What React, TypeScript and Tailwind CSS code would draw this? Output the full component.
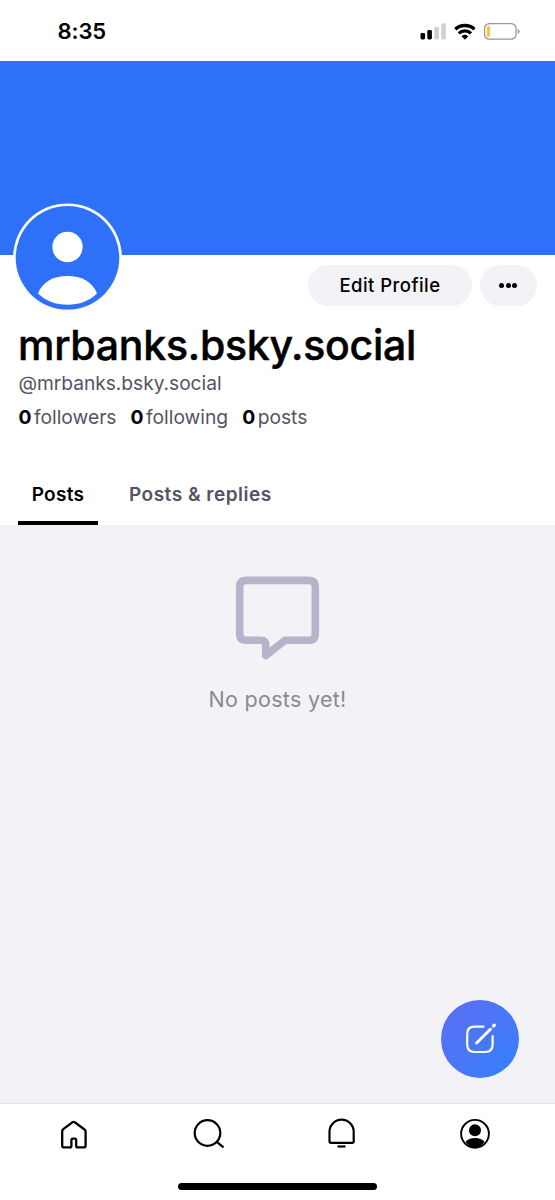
import React from 'react';

function StatusBar() {
  return (
    <header className="flex h-[61px] shrink-0 items-start justify-between pl-[57.500px] pr-[35px]">
      <span className="pt-[16px] text-[22px] font-semibold leading-[30px] tracking-[-0.1px]">8:35</span>
      <svg className="mt-[20px]" width="100" height="24" viewBox="420 20 100 24">
        <rect x="420.5" y="33" width="4.6" height="6.5" rx="1.4" fill="#000" />
        <rect x="427.3" y="30" width="4.6" height="9.5" rx="1.4" fill="#000" />
        <rect x="434.3" y="26.7" width="4.6" height="12.8" rx="1.4" fill="#d0d0d0" />
        <rect x="441.2" y="23.3" width="4.6" height="16.2" rx="1.4" fill="#d0d0d0" />
        <path d="M455.3 29.3 A14.2 14.2 0 0 1 474.5 29.3" fill="none" stroke="#000" strokeWidth="3.4" />
        <path d="M458.8 33.4 A8.6 8.6 0 0 1 471 33.4" fill="none" stroke="#000" strokeWidth="3.2" />
        <path d="M461.5 36.3 Q464.9 33.4 468.3 36.3 L464.9 39.8 Z" fill="#000" />
        <rect x="484.6" y="23.6" width="31.4" height="15.6" rx="4.8" fill="#fff" stroke="#96939b" strokeWidth="1.2" />
        <rect x="486.9" y="25.9" width="3.2" height="11" rx="1.4" fill="#f5c838" />
        <path d="M517.6 28.9 Q519.6 29.6 519.6 31.4 Q519.6 33.2 517.6 33.9 Z" fill="#96939b" />
      </svg>
    </header>
  );
}

function Avatar() {
  return (
    <svg className="relative -mt-[52px] ml-[13px] shrink-0" width="109" height="110" viewBox="13 203 109 110">
      <circle cx="67.5" cy="257.8" r="54.4" fill="#fff" />
      <circle cx="67.5" cy="257.8" r="51.8" fill="#2f70f8" />
      <circle cx="67.5" cy="247" r="15.2" fill="#fff" />
      <path d="M38 293.4 C42.5 281.5 54 276 67.5 276 C81 276 92.5 281.5 97 293.4 C89.5 300.8 79 304.7 67.5 304.7 C56 304.7 45.5 300.8 38 293.4 Z" fill="#fff" />
    </svg>
  );
}

function Stat({ label }: { label: string }) {
  return (
    <span className="flex gap-[3px]">
      <b className="w-[12.500px] font-bold text-black">0</b>
      <span>{label}</span>
    </span>
  );
}

function EmptyFeed() {
  return (
    <main className="flex h-[578px] shrink-0 flex-col items-center bg-[#f2f2f7]">
      <svg className="mt-[47px]" width="92" height="92" viewBox="232 572 92 92" fill="none" stroke="#b6b4ca" strokeWidth="7.6" strokeLinejoin="round">
        <path d="M246 580.4 H309 Q315.3 580.4 315.3 586.7 V634 Q315.3 640.3 309 640.3 H285 L265.8 655.5 V645.5 Q265.8 640.3 260.6 640.3 H246 Q239.7 640.3 239.7 634 V586.7 Q239.7 580.4 246 580.4 Z" />
      </svg>
      <p className="mt-[20px] text-[21.500px] leading-[30px] tracking-[0.3px] text-[#8b8a91]">No posts yet!</p>
    </main>
  );
}

function ComposeButton() {
  return (
    <button aria-label="New post" className="absolute left-[441px] top-[1000px] size-[78px] rounded-full bg-linear-to-br from-[#5a6df3] to-[#2f80fb]">
      <svg width="78" height="78" viewBox="441 1000 78 78" fill="none" stroke="#fff" strokeLinecap="round">
        <path d="M483.5 1026.7 H474.5 Q467.2 1026.7 467.2 1034 V1044.8 Q467.2 1052 474.5 1052 H485.3 Q492.6 1052 492.6 1044.8 V1036" strokeWidth="2.2" />
        <path d="M476.6 1043 L490.4 1029.3" strokeWidth="3" />
        <path d="M493.6 1025.9 L494.2 1025.3" strokeWidth="3.4" />
      </svg>
    </button>
  );
}

function BottomNav() {
  return (
    <nav className="flex h-[97px] shrink-0 flex-col items-center border-t border-[#e3e3e6] bg-white">
      <div className="flex h-[62px] w-full items-center gap-[99px] pl-[57px]">
        <svg className="mr-[2px] shrink-0" width="34" height="34" viewBox="57 1118 34 34" fill="none" stroke="#000" strokeWidth="2.3" strokeLinejoin="round">
          <path d="M62.2 1131.2 Q62.2 1130 63.3 1129.2 L72.3 1122.3 Q73.5 1121.5 74.7 1122.3 L84.2 1129.2 Q85.6 1130.2 85.6 1131.7 V1145.4 Q85.6 1147.4 83.6 1147.4 H77.6 Q76.2 1147.4 76.2 1146 V1140 Q76.2 1138.6 74.8 1138.6 H72.8 Q71.4 1138.6 71.4 1140 V1146 Q71.4 1147.4 70 1147.4 H64.2 Q62.2 1147.4 62.2 1145.4 Z" />
        </svg>
        <svg className="shrink-0" width="34" height="34" viewBox="192 1118 34 34" fill="none" stroke="#000" strokeWidth="2.2">
          <circle cx="207.5" cy="1133" r="12.8" />
          <path d="M216.8 1141.8 L223.5 1147.3" />
        </svg>
        <svg className="shrink-0" width="34" height="34" viewBox="325 1118 34 34" fill="none" stroke="#000" strokeWidth="2.2">
          <path d="M329.5 1131.8 A12.1 12.1 0 0 1 353.7 1131.8 V1141.2 Q353.7 1142.8 352.1 1142.8 H331.1 Q329.5 1142.8 329.5 1141.2 Z" />
          <path d="M337.5 1146.5 H345.5" />
        </svg>
        <svg className="shrink-0" width="34" height="34" viewBox="458 1118 34 34">
          <circle cx="475" cy="1133.8" r="13.9" fill="none" stroke="#000" strokeWidth="1.9" />
          <circle cx="475" cy="1130.3" r="6" fill="#000" />
          <path d="M465.5 1142 Q468.5 1138 475 1138 Q481.5 1138 484.5 1142 Q481 1147.6 475 1147.6 Q469 1147.6 465.5 1142 Z" fill="#000" />
        </svg>
      </div>
      <div className="mt-[17px] h-[7px] w-[199px] rounded-full bg-black" />
    </nav>
  );
}

export default function App() {
  return (
    <div className="relative flex h-[1200px] w-[555px] flex-col overflow-hidden bg-white font-['Inter',sans-serif] text-black">
      <StatusBar />
      <div className="h-[194px] shrink-0 bg-[#2f70f8]" />
      <div className="flex h-[69px] shrink-0 items-start justify-between pr-[18px]">
        <Avatar />
        <div className="flex gap-2 pt-[10px]">
          <button className="h-[41px] w-[164px] rounded-full bg-[#f2f2f7] pt-px text-[18.500px] font-medium tracking-[0.45px]">Edit Profile</button>
          <button aria-label="More" className="flex h-[41px] w-[57px] items-center justify-center gap-[1.500px] rounded-full bg-[#f2f2f7] pr-px">
            <span className="size-[5px] rounded-full bg-black" />
            <span className="size-[5px] rounded-full bg-black" />
            <span className="size-[5px] rounded-full bg-black" />
          </button>
        </div>
      </div>
      <section className="h-[143px] shrink-0 pl-[18.500px] text-[#545364]">
        <h1 className="-ml-[0.500px] whitespace-nowrap text-[41px] font-medium leading-[42px] tracking-[-0.27px] text-black [-webkit-text-stroke:0.5px_#000]">mrbanks.bsky.social</h1>
        <p className="mt-[2px] text-[19.200px] leading-[30px] tracking-[-0.03px]">@mrbanks.bsky.social</p>
        <div className="mt-1 flex gap-[14px] text-[19.300px] leading-[30px] tracking-[-0.03px]">
          <Stat label="followers" />
          <Stat label="following" />
          <Stat label="posts" />
        </div>
      </section>
      <div className="flex h-[58px] shrink-0 items-stretch gap-[18px] pl-[18px] text-[19px] font-semibold leading-[30px] tracking-[0.3px]">
        <div className="w-[80px] border-b-4 border-black pt-[13px] text-center">Posts</div>
        <div className="whitespace-nowrap pl-[13px] pt-[13px] tracking-[0.5px] text-[#545364]">Posts &amp; replies</div>
      </div>
      <EmptyFeed />
      <BottomNav />
      <ComposeButton />
    </div>
  );
}
